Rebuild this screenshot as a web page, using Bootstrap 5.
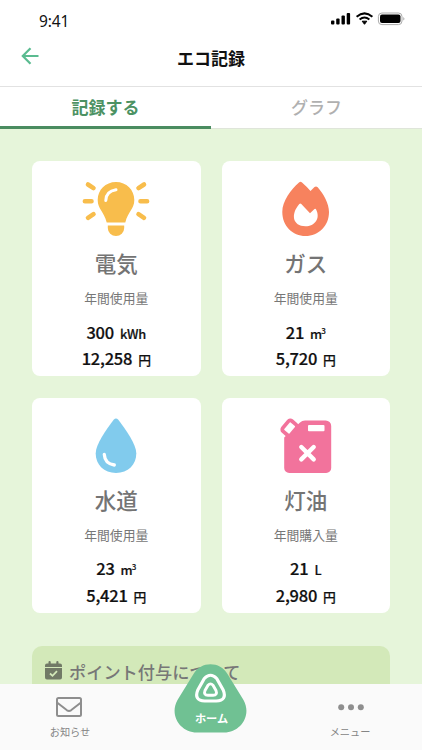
<!DOCTYPE html>
<html lang="ja">
<head>
<meta charset="utf-8">
<meta name="viewport" content="width=device-width, initial-scale=1">
<title>エコ記録</title>
<link href="https://cdn.jsdelivr.net/npm/bootstrap@5.3.0/dist/css/bootstrap.min.css" rel="stylesheet">
<style>
body{font-family:"Noto Sans CJK JP",sans-serif;background:#e6f5da;height:750px;overflow:hidden;color:#111}
svg{display:block;flex:none}
.status-bar{height:40px;padding:1px 16px 0 39px}
.status-bar svg{margin-top:-3px}
.clock{font-family:"Noto Sans","Noto Sans CJK JP",sans-serif;font-size:15.5px;letter-spacing:-.1px;line-height:40px}
.title-bar{height:47px;border-bottom:1px solid #e2e2e2}
.title-bar h1{font-size:17px;line-height:36px;margin:0}
.back{width:60px;padding:7px 0 0 21px}
.tabs{height:42px}
.tabs a{font-size:17px;line-height:40px;color:#b0b0b0;border-bottom:1px solid #dfe5da;font-weight:500}
.tabs a.active{color:#4c9263;border-bottom:3px solid #4a8c60;font-weight:700}
.grid{padding:32px 32px 0;row-gap:21.5px;column-gap:21px}
.usage{width:168.5px;height:215px;border-radius:8px;background:#fff;padding-top:20px}
.usage h2{font-size:21.5px;line-height:30px;font-weight:500;color:#747474;margin:11px 0 0}
.usage .caption-line{font-size:12.8px;line-height:20px;color:#777;margin:10px 0 0}
.figures{margin-top:11.5px}
.figures div{font-size:16.5px;line-height:24.5px;font-weight:500;-webkit-text-stroke:.2px #111;letter-spacing:-.25px;color:#111;gap:6px}
.figures small{font-size:12.8px;font-weight:500;letter-spacing:-.2px}
.figures small.cubic{letter-spacing:-1px;padding-right:1px}
.figures small.cubic sup{font-size:8px;top:-.6em;line-height:0}
.notice{margin:33px 32px 0;height:80px;border-radius:10px;background:#d3e9b9;padding:8px 13px;color:#777;gap:7px}
.notice svg{margin-top:7px}
.notice h3{font-size:17.2px;line-height:36px;font-weight:500;margin:0}
.dock{height:66px;background:#fafafa}
.dock a{width:140px;color:#858585;font-size:10.2px;line-height:18px}
.dock a svg{margin:13px 3px 6px 0}
.home{left:173px;top:-20px;width:75px;height:70px}
.home span{left:2px;right:0;top:45px;color:#fff;font-size:11.2px;font-weight:700;line-height:18px}
</style>
<script src="https://cdn.jsdelivr.net/npm/bootstrap@5.3.0/dist/js/bootstrap.bundle.min.js"></script>
</head>
<body>
<header class="bg-white">
  <div class="status-bar d-flex justify-content-between align-items-center">
    <span class="clock">9:41</span>
    <svg width="76" height="14" viewBox="0 0 76 14">
      <g fill="#000"><rect x="1" y="8.500" width="3.400" height="4" rx="1"/><rect x="6.200" y="6.500" width="3.400" height="6" rx="1"/><rect x="11.500" y="3.500" width="3.400" height="9" rx="1"/><rect x="16.700" y="1" width="3.400" height="11.500" rx="1"/><path d="M32.200 9.200L36.800 9.200 34.500 12.300Z" stroke="#000" stroke-width="1" stroke-linejoin="round"/></g>
      <g fill="none" stroke="#000" stroke-width="2"><path d="M26.600 4.700Q34.500-2 42.400 4.700M29.600 7.500Q34.500 3.600 39.400 7.500"/></g>
      <rect x="48.400" y="1" width="23.600" height="11.600" rx="3.500" fill="none" stroke="#aaa"/><rect x="50" y="2.600" width="20.500" height="8.400" rx="2"/><path d="M73.400 5v3.600q2-1.800 0-3.600" fill="#999"/>
    </svg>
  </div>
  <div class="title-bar d-flex">
    <a class="back" href="#"><svg width="19" height="18" viewBox="0 0 19 18" fill="none" stroke="#5abb90" stroke-width="2.200"><path d="M17.500 9H2M9.500 1.200L1.800 9l7.700 7.800"/></svg></a>
    <h1 class="flex-grow-1 text-center fw-bold">エコ記録</h1>
    <div class="back"></div>
  </div>
  <nav class="tabs d-flex text-center">
    <a class="active w-50 text-decoration-none" href="#">記録する</a>
    <a class="w-50 text-decoration-none" href="#">グラフ</a>
  </nav>
</header>
<main>
  <div class="grid d-flex flex-wrap">
    <section class="usage d-flex flex-column align-items-center">
      <svg width="68" height="56" viewBox="0 0 68 56" fill="#f8bd4c"><path d="M34 1C23.500 1 15.700 8.900 15.700 19c0 9.200 6.400 11.500 9 22.500h18.600c2.600-11 9-13.300 9-22.500C52.300 8.900 44.500 1 34 1zM25.800 44.500h16.400v2.500a8.200 8 0 0 1-16.400 0z"/><g fill="none" stroke="#f8bd4c" stroke-width="4.600" stroke-linecap="round"><path d="M6 3.500l5.500 3.600M2.900 20.300h6.600M6 36.800l5.500-3.600M62 3.500l-5.500 3.600M65.100 20.300h-6.600M62 36.800l-5.500-3.600"/></g><path d="M23.800 19.500q.2-9.300 10.200-10.800" fill="none" stroke="#fff" stroke-width="3" stroke-linecap="round"/></svg>
      <h2>電気</h2><p class="caption-line">年間使用量</p>
      <div class="figures text-center"><div class="d-flex justify-content-center align-items-baseline">300 <small>kWh</small></div><div class="d-flex justify-content-center align-items-baseline">12,258 <small>円</small></div></div>
    </section>
    <section class="usage d-flex flex-column align-items-center">
      <svg width="48" height="56" viewBox="0 0 48 56"><path d="M17 1.600q1.500-1.500 3 0 5 4.400 8.500 8.500l4-4q1.600-1.400 3.200.2C41.600 13 47 22.500 47 31c0 14-10.500 24-23.500 24S.300 45 .300 31C.300 20 9 8.700 17 1.600z" fill="#f7825e"/><path d="M17.300 23q1-1 2 0l8.700 9.300 4.500-4.200q1-.8 1.600.3c4.600 9-1.300 16.800-10.600 16.800-13 0-15-12-6.200-22.200z" fill="#fff"/></svg>
      <h2>ガス</h2><p class="caption-line">年間使用量</p>
      <div class="figures text-center"><div class="d-flex justify-content-center align-items-baseline">21 <small class="cubic">m<sup>3</sup></small></div><div class="d-flex justify-content-center align-items-baseline">5,720 <small>円</small></div></div>
    </section>
    <section class="usage d-flex flex-column align-items-center">
      <svg width="42" height="56" viewBox="0 0 42 56"><path d="M18.700 1.700q2.300-2.500 4.600 0C31 12 41.300 26 41.300 35.500 41.300 46.500 33 55 21 55S.700 46.500.700 35.500C.700 26 11 12 18.700 1.700z" fill="#81cbed"/><path d="M9.300 36.500q.5 9 10 10.500" fill="none" stroke="#fff" stroke-width="3.300" stroke-linecap="round"/></svg>
      <h2>水道</h2><p class="caption-line">年間使用量</p>
      <div class="figures text-center"><div class="d-flex justify-content-center align-items-baseline">23 <small class="cubic">m<sup>3</sup></small></div><div class="d-flex justify-content-center align-items-baseline">5,421 <small>円</small></div></div>
    </section>
    <section class="usage d-flex flex-column align-items-center">
      <svg width="54" height="56" viewBox="0 0 54 56"><path d="M5.200 19.500v30.500a5 5 0 0 0 5 5h37a5 5 0 0 0 5-5V8a5.500 5.500 0 0 0-5.500-5.500H26q-3 0-5 2L5.200 19.500z" fill="#f2739c"/><rect x="5.400" y="3.300" width="10.500" height="13.500" rx="2.500" transform="rotate(40 10.700 10)" fill="#fff" stroke="#f2739c" stroke-width="3.800"/><rect x="29" y="7" width="16.500" height="6.300" rx="1" fill="#fff"/><path d="M22.300 29l12.400 12.400m0-12.400L22.300 41.400" fill="none" stroke="#fff" stroke-width="4.400" stroke-linecap="round"/></svg>
      <h2>灯油</h2><p class="caption-line">年間購入量</p>
      <div class="figures text-center"><div class="d-flex justify-content-center align-items-baseline">21 <small>L</small></div><div class="d-flex justify-content-center align-items-baseline">2,980 <small>円</small></div></div>
    </section>
  </div>
  <div class="notice d-flex align-items-start">
    <svg width="17" height="19" viewBox="0 0 17 19"><path d="M2 2.500h1.500V1q0-1 1.100-1T5.700 1v1.500h5.600V1q0-1 1.100-1T13.500 1v1.500H15q2 0 2 2V6H0V4.500q0-2 2-2zM0 7h17v9.500q0 2-2 2H2q-2 0-2-2z" fill="#717a66"/><path d="M5 12.500l2.500 2.300L12 10.200" fill="none" stroke="#d3e9b9" stroke-width="1.800"/></svg>
    <h3>ポイント付与について</h3>
  </div>
</main>
<nav class="dock fixed-bottom d-flex justify-content-between text-center">
  <a href="#" class="text-decoration-none d-flex flex-column align-items-center"><svg width="26" height="20" viewBox="0 0 26 20" fill="none" stroke="#8e8e8e" stroke-width="2"><rect x="1" y="1" width="24" height="18" rx="1.500"/><path d="M1 5.500l10 7.800q2 1.300 4 0l10-7.800"/></svg>お知らせ</a>
  <a href="#" class="text-decoration-none d-flex flex-column align-items-center pe-1"><svg class="ms-1" width="26" height="20" viewBox="0 0 26 20" fill="#8e8e8e"><circle cx="3.200" cy="10.200" r="3"/><circle cx="13" cy="10.200" r="3"/><circle cx="22.800" cy="10.200" r="3"/></svg>メニュー</a>
  <div class="home position-absolute">
    <svg width="75" height="70" viewBox="0 0 75 70"><path d="M20.500 10C28-3 47-3 54.500 10L70.500 36C79 51 68 68.600 51 68.600H24C7 68.600-4 51 4.500 36z" fill="#70c193"/><g fill="none" stroke="#fff" stroke-linejoin="round"><path d="M31.300 14.500q6.200-6.500 12.400 0l6.500 11.500q4.200 10.500-7 11h-11.400q-11.200-.5-7-11z" stroke-width="3.200"/><path d="M35 21.200q2.500-2.600 5 0l3 5.300q1.700 4.500-3 4.700h-5q-4.700-.2-3-4.700z" stroke-width="2.900"/></g></svg>
    <span class="position-absolute text-center">ホーム</span>
  </div>
</nav>
</body>
</html>
